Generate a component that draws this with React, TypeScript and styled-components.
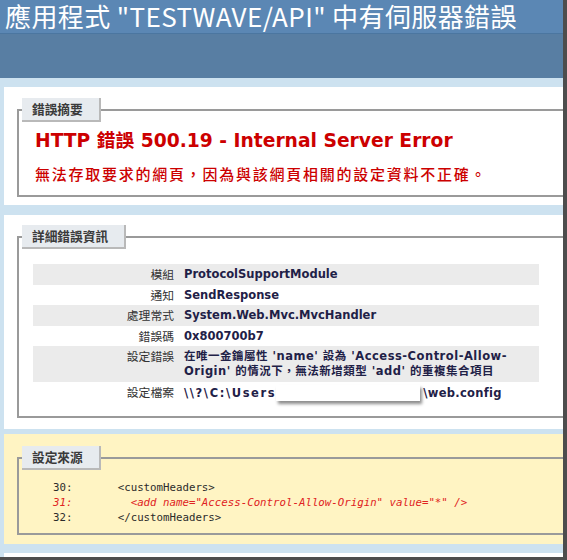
import React from 'react';
import styled, { createGlobalStyle } from 'styled-components';

const Global = createGlobalStyle`
  html, body {
    margin: 0;
    padding: 0;
    background: #ffffff;
  }
`;

const Frame = styled.div`
  width: 563px;
  height: 557px;
  overflow: hidden;
  background: #cde2f0;
  border-right: 4px solid #4d4d4d;
  border-bottom: 3px solid #4d4d4d;
  display: flex;
  flex-direction: column;
`;

const TitleBar = styled.h1`
  margin: 0;
  height: 33px;
  padding-left: 5px;
  background: #5b87b4;
  border-bottom: 1px solid #4b76a0;
  color: #ffffff;
  font-family: "Noto Sans CJK TC", "DejaVu Sans", sans-serif;
  font-size: 26px;
  letter-spacing: 0.4px;
  font-weight: normal;
  line-height: 32px;
  white-space: nowrap;
  flex-shrink: 0;
`;

const Band = styled.div`
  height: 44px;
  background: #587ea3;
  flex-shrink: 0;
`;

const Content = styled.div`
  padding: 9px 0 0 4px;
  display: flex;
  flex-direction: column;
`;

const Panel = styled.div<{ $tone?: 'white' | 'yellow'; $top: number; $bottom: number; $gap: number }>`
  background: ${(p) => (p.$tone === 'yellow' ? '#fff4c3' : '#ffffff')};
  padding: ${(p) => p.$top}px 0 ${(p) => p.$bottom}px 13px;
  margin-bottom: ${(p) => p.$gap}px;
`;

const Group = styled.div<{ $bottom: number }>`
  border: 2px solid #9a9a9a;
  border-right: none;
  padding: 0 0 ${(p) => p.$bottom}px 14px;
`;

const Caption = styled.div`
  width: fit-content;
  margin: -13px 0 0 -11px;
  height: 22px;
  padding: 0 16px 0 10px;
  background: #e7ebef;
  border-right: 2px solid #b9b9b9;
  border-bottom: 2px solid #b9b9b9;
  color: #3a3a3a;
  font-family: "Noto Sans CJK TC", sans-serif;
  font-size: 12.7px;
  font-weight: bold;
  line-height: 22px;
`;

const Heading = styled.h2`
  margin: 7px 0 0 2px;
  color: #cc0000;
  font-family: "DejaVu Sans", "Noto Sans CJK TC", sans-serif;
  font-size: 18.7px;
  font-weight: bold;
  line-height: 24px;
  white-space: nowrap;
`;

const Summary = styled.h3`
  margin: 11px 0 0 2px;
  color: #cc0000;
  font-family: "Noto Sans CJK TC", sans-serif;
  font-size: 15px;
  letter-spacing: 1.75px;
  font-weight: 500;
  line-height: 20px;
  white-space: nowrap;
`;

const Table = styled.table`
  margin-top: 15px;
  width: 506px;
  border-collapse: collapse;
`;

const Row = styled.tr<{ $shaded?: boolean }>`
  background: ${(p) => (p.$shaded ? '#ebebeb' : 'transparent')};
`;

const Label = styled.th`
  width: 136px;
  padding: 3px 5px;
  text-align: right;
  vertical-align: top;
  color: #333333;
  font-family: "Noto Sans CJK TC", sans-serif;
  font-size: 11.8px;
  font-weight: normal;
  line-height: 14.6px;
  white-space: nowrap;
`;

const Value = styled.td`
  padding: 3px 5px;
  vertical-align: top;
  color: #1f2147;
  font-family: "DejaVu Sans", "Noto Sans CJK TC", sans-serif;
  font-size: 11.5px;
  font-weight: bold;
  line-height: 14.6px;
  white-space: nowrap;
`;

const Wide = styled.span<{ $spacing: number }>`
  letter-spacing: ${(p) => p.$spacing}px;
`;

const Redacted = styled.span`
  display: inline-block;
  width: 144px;
  height: 16px;
  margin: 0 3px 0 0;
  vertical-align: -4px;
  background: #ffffff;
  box-shadow: 2px 3px 3px rgba(0, 0, 0, 0.45);
`;

const Code = styled.pre`
  margin: 10px 0 0 20px;
  color: #2b2b2b;
  font-family: "DejaVu Sans Mono", monospace;
  font-size: 10.75px;
  line-height: 15px;
`;

const CodeLine = styled.div<{ $hot?: boolean }>`
  color: ${(p) => (p.$hot ? '#e02222' : '#2b2b2b')};
  font-style: ${(p) => (p.$hot ? 'italic' : 'normal')};
`;

const details: { label: string; value: React.ReactNode }[] = [
  { label: '模組', value: 'ProtocolSupportModule' },
  { label: '通知', value: 'SendResponse' },
  { label: '處理常式', value: 'System.Web.Mvc.MvcHandler' },
  { label: '錯誤碼', value: '0x800700b7' },
  {
    label: '設定錯誤',
    value: (
      <Wide $spacing={0.5}>
        在唯一金鑰屬性 'name' 設為 'Access-Control-Allow-
        <br />
        Origin' 的情況下，無法新增類型 'add' 的重複集合項目
      </Wide>
    ),
  },
  {
    label: '設定檔案',
    value: (
      <>
        <Wide $spacing={1.6}>\\?\C:\Users</Wide>
        <Redacted />
        <Wide $spacing={0.3}>\web.config</Wide>
      </>
    ),
  },
];

export default function App() {
  return (
    <>
      <Global />
      <Frame>
        <TitleBar>應用程式 "TESTWAVE/API" 中有伺服器錯誤</TitleBar>
        <Band />
        <Content>
          <Panel $top={22} $bottom={8} $gap={10}>
            <Group $bottom={11}>
              <Caption>錯誤摘要</Caption>
              <Heading>HTTP 錯誤 500.19 - Internal Server Error</Heading>
              <Summary>無法存取要求的網頁，因為與該網頁相關的設定資料不正確。</Summary>
            </Group>
          </Panel>

          <Panel $top={21} $bottom={11} $gap={5}>
            <Group $bottom={12}>
              <Caption>詳細錯誤資訊</Caption>
              <Table>
                <tbody>
                  {details.map((d, i) => (
                    <Row key={d.label} $shaded={i % 2 === 0}>
                      <Label>{d.label}</Label>
                      <Value>{d.value}</Value>
                    </Row>
                  ))}
                </tbody>
              </Table>
            </Group>
          </Panel>

          <Panel $tone="yellow" $top={23} $bottom={9} $gap={9}>
            <Group $bottom={8}>
              <Caption>設定來源</Caption>
              <Code>
                <CodeLine>{'30:       <customHeaders>'}</CodeLine>
                <CodeLine $hot>{'31:         <add name="Access-Control-Allow-Origin" value="*" />'}</CodeLine>
                <CodeLine>{'32:       </customHeaders>'}</CodeLine>
              </Code>
            </Group>
          </Panel>

          <Panel $top={10} $bottom={10} $gap={0} />
        </Content>
      </Frame>
    </>
  );
}
